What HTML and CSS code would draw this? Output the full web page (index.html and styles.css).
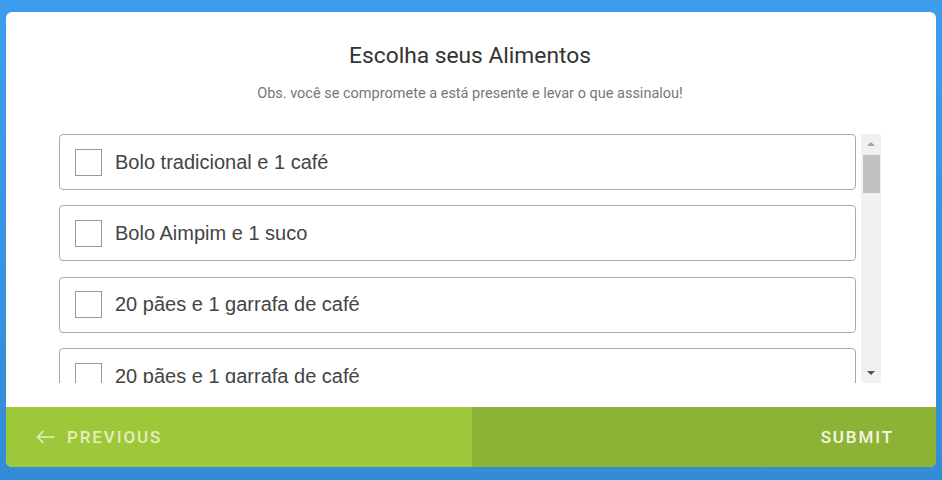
FILE: index.html
```html
<!DOCTYPE html>
<html lang="pt">
<head>
<meta charset="utf-8">
<title>Escolha seus Alimentos</title>
<link rel="stylesheet" href="styles.css">
</head>
<body>
<div class="card">
  <div class="content">
    <h1 class="title">Escolha seus Alimentos</h1>
    <p class="subtitle">Obs. você se compromete a está presente e levar o que assinalou!</p>
    <div class="list-wrap">
      <div class="list">
        <label class="item"><span class="box"></span><span class="label">Bolo tradicional e 1 café</span></label>
        <label class="item"><span class="box"></span><span class="label">Bolo Aimpim e 1 suco</span></label>
        <label class="item"><span class="box"></span><span class="label">20 pães e 1 garrafa de café</span></label>
        <label class="item"><span class="box"></span><span class="label">20 pães e 1 garrafa de café</span></label>
      </div>
      <div class="scrollbar">
        <span class="arrow up"></span>
        <span class="thumb"></span>
        <span class="track-fill"></span>
        <span class="arrow down"></span>
      </div>
    </div>
  </div>
  <div class="footer">
    <div class="btn prev">
      <svg class="arrow-icon" width="19" height="14" viewBox="0 0 19 14"><path d="M18.5 7H1.5M7.5 1L1.5 7l6 6" fill="none" stroke="currentColor" stroke-width="1.6"/></svg>
      <span>PREVIOUS</span>
    </div>
    <div class="btn submit"><span>SUBMIT</span></div>
  </div>
</div>
</body>
</html>
```
FILE: styles.css
```css
* { box-sizing: border-box; }
html, body { margin: 0; padding: 0; }
body {
  width: 942px;
  height: 480px;
  background: linear-gradient(180deg, #3d9ded 0%, #348bd6 100%);
  padding: 12px 6px 13px;
  overflow: hidden;
}
.card {
  height: 455px;
  background: #fff;
  border-radius: 6px;
  overflow: hidden;
  display: flex;
  flex-direction: column;
}
.content {
  flex: 1;
  padding: 31px 55px 0 53px;
  display: flex;
  flex-direction: column;
}
.title {
  margin: 0;
  text-align: center;
  font-family: Roboto, "Liberation Sans", sans-serif;
  font-weight: 400;
  font-size: 22.75px;
  line-height: 26px;
  color: #333;
}
.subtitle {
  margin: 16px 0 0;
  text-align: center;
  font-family: Roboto, "Liberation Sans", sans-serif;
  font-size: 14.5px;
  line-height: 18px;
  color: #777;
}
.list-wrap {
  margin-top: 31px;
  height: 249px;
  display: flex;
  gap: 5px;
}
.list {
  flex: 1;
  overflow: hidden;
  display: flex;
  flex-direction: column;
  gap: 15.35px;
}
.item {
  flex: 0 0 56px;
  border: 1px solid #a9a9a9;
  border-radius: 4px;
  display: flex;
  align-items: center;
  padding-left: 15px;
  gap: 13px;
}
.box {
  width: 27px;
  height: 27px;
  border: 1px solid #999;
  flex: 0 0 auto;
}
.label {
  font-family: "Liberation Sans", Arial, sans-serif;
  font-size: 20px;
  color: #444;
}
.scrollbar {
  width: 20px;
  background: #f1f1f1;
  display: flex;
  flex-direction: column;
  align-items: center;
}
.arrow {
  width: 0;
  height: 0;
  border-left: 4px solid transparent;
  border-right: 4px solid transparent;
}
.arrow.up {
  margin-top: 8px;
  border-bottom: 4px solid #a3a3a3;
}
.thumb {
  margin-top: 9px;
  width: 17px;
  height: 38px;
  background: #c1c1c1;
}
.track-fill { flex: 1; }
.arrow.down {
  margin-bottom: 8px;
  border-top: 4px solid #505050;
}
.footer {
  height: 60px;
  display: flex;
  font-family: Roboto, "Liberation Sans", sans-serif;
  font-weight: 500;
  font-size: 17px;
  letter-spacing: 1.9px;
}
.btn {
  display: flex;
  align-items: center;
}
.prev {
  flex: 0 0 466px;
  background: #9dc83a;
  color: #e3eebf;
  padding-left: 30px;
  gap: 12px;
}
.submit {
  flex: 1;
  background: #8db336;
  color: #f3f7e4;
  justify-content: flex-end;
  padding-right: 42px;
}
.arrow-icon { display: block; }
```
